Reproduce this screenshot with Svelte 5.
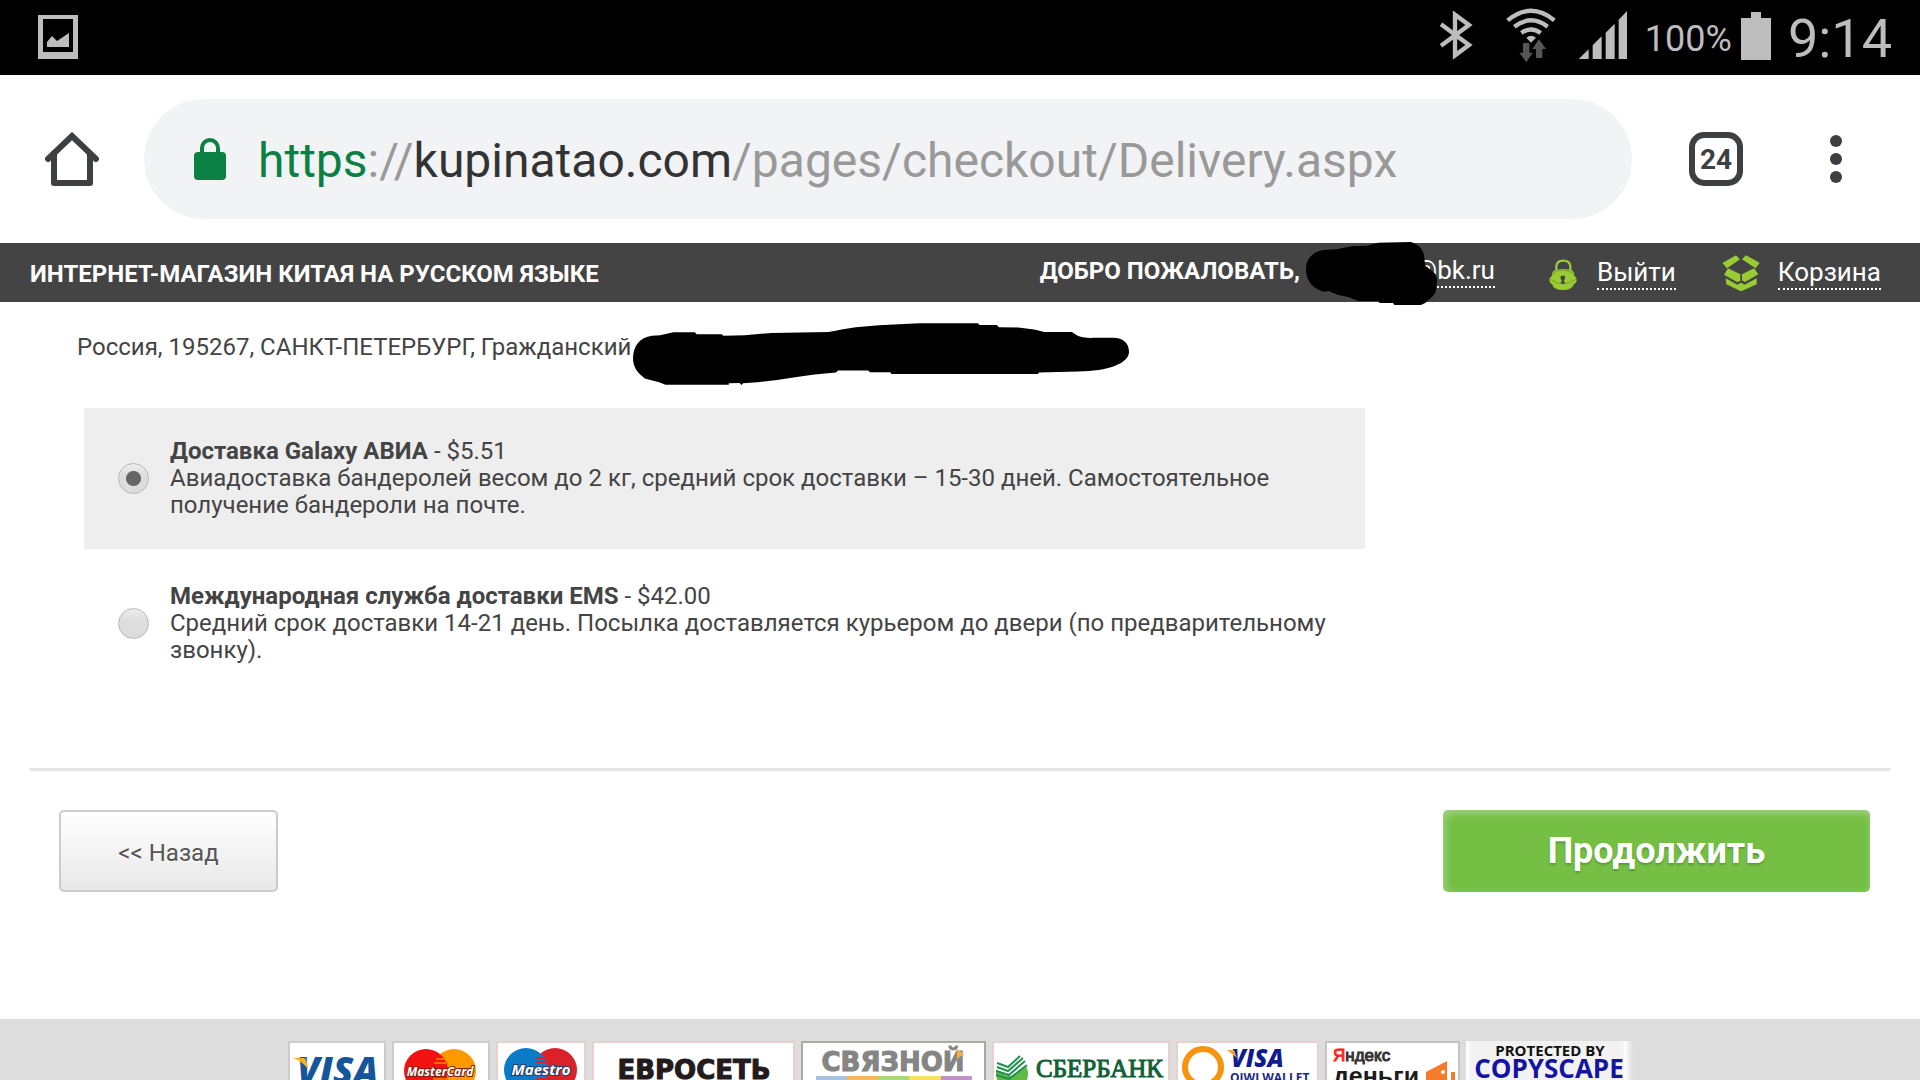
<script lang="ts">
  let selected = $state('avia');

  const options = [
    {
      id: 'avia',
      name: 'Доставка Galaxy АВИА',
      price: '$5.51',
      text: 'Авиадоставка бандеролей весом до 2 кг, средний срок доставки – 15-30 дней. Самостоятельное получение бандероли на почте.',
    },
    {
      id: 'ems',
      name: 'Международная служба доставки EMS',
      price: '$42.00',
      text: 'Средний срок доставки 14-21 день. Посылка доставляется курьером до двери (по предварительному звонку).',
    },
  ];
</script>

<div class="screen">
  <div class="status">
    <svg class="photo" width="40" height="44" viewBox="0 0 40 44">
      <path fill="#bdbdbd" fill-rule="evenodd" d="M0 0H40V44H0ZM5 4V37H35V4Z" />
      <path fill="#bdbdbd" d="M9 27L14 21L19 26L31 18V32H9Z" />
    </svg>
    <div class="status-right">
      <svg class="bluetooth" width="34" height="49" viewBox="118 36 102 147" fill="none" stroke="#bdbdbd" stroke-width="13">
        <path d="M124 76L208 138L166 169V47L208 78L124 140" />
      </svg>
      <svg class="wifi" width="52" height="55" viewBox="315 24 156 165">
        <g fill="none" stroke="#bdbdbd" stroke-width="13">
          <path d="M323 61Q393 4 463 61" />
          <path d="M343 80Q393 42 443 80" />
          <path d="M364 99Q393 78 422 99" />
        </g>
        <path fill="#bdbdbd" d="M379 113Q393 102 408 113L393 128Z" />
        <path fill="#565656" d="M369 129H388V158H398L379 187L358 158H369ZM417 118L438 147H427V174H408V147H397Z" />
      </svg>
      <svg class="signal" width="49" height="49" viewBox="535 36 147 147" fill="#bdbdbd">
        <path d="M537 180L567 151V180ZM579 139L606 112V180H579ZM618 101L645 74V180H618ZM657 62L682 36V180H657Z" />
      </svg>
      <span class="percent">100%</span>
      <svg class="battery" width="30" height="48" viewBox="0 0 30 48" fill="#bdbdbd">
        <path d="M10 0H20V6H30V48H0V6H10Z" />
      </svg>
      <span class="clock">9:14</span>
    </div>
  </div>

  <div class="toolbar">
    <button class="icon-button home" aria-label="Home">
      <svg width="54" height="54" viewBox="0 0 54 54" fill="none" stroke="#3c4043" stroke-width="6">
        <path stroke-linecap="round" d="M3 27L27 4L51 27" />
        <path stroke-linejoin="round" d="M9 22V51H45V22" />
      </svg>
    </button>
    <button class="omnibox">
      <svg width="32" height="42" viewBox="0 0 32 42">
        <rect y="14" width="32" height="28" rx="4" fill="#0b8043" />
        <path d="M8 15V10a8 8 0 0 1 16 0V15" fill="none" stroke="#0b8043" stroke-width="4" />
      </svg>
      <span class="url"><span class="scheme">https</span>://<span class="host">kupinatao.com</span>/pages/checkout/Delivery.aspx</span>
    </button>
    <button class="tabs">24</button>
    <button class="icon-button" aria-label="Menu">
      <svg width="12" height="48" viewBox="0 0 12 48" fill="#3c4043">
        <circle cx="6" cy="6" r="6" /><circle cx="6" cy="24" r="6" /><circle cx="6" cy="42" r="6" />
      </svg>
    </button>
  </div>

  <header class="site">
    <strong class="title">ИНТЕРНЕТ-МАГАЗИН КИТАЯ НА РУССКОМ ЯЗЫКЕ</strong>
    <div class="account">
      <strong class="welcome">ДОБРО ПОЖАЛОВАТЬ,</strong>
      <span class="mail">
        <a class="email" href="#profile">@bk.ru</a>
        <svg class="blob" width="131" height="63" viewBox="857 37 366 189" preserveAspectRatio="none">
          <path d="M857 120C857 90 872 68 905 61L942 59L985 50L1028 48L1058 39L1150 37C1172 45 1186 60 1187 80L1190 108C1205 120 1222 130 1223 148L1221 180C1217 200 1200 208 1190 220L1178 226H1104L1100 220H1063L1058 214H1003L975 202L948 196L920 184L908 186C880 180 857 155 857 120Z" />
        </svg>
      </span>
      <svg class="padlock" width="28" height="31" viewBox="448 778 84 93">
        <path d="M470 822V800Q471 783 491 783Q511 783 512 800V822" fill="none" stroke="#9c3" stroke-width="7" />
        <path d="M462 813Q490 803 519 813Q525 820 524 828Q532 834 531 843Q530 850 523 853Q517 871 490 871Q462 871 457 853Q449 850 449 841Q449 833 457 828Q456 820 462 813Z" fill="#9c3" />
        <path d="M453 839Q490 867 528 839M458 826Q466 811 489 812Q514 812 523 826" fill="none" stroke="#76a02c" stroke-width="3" />
        <path d="M483 828H496V838L493 842L496 852H483L486 842L483 838Z" fill="#444" />
      </svg>
      <a href="#logout">Выйти</a>
      <svg class="box" width="38" height="36" viewBox="968 768 114 108" fill="#9c3">
        <path d="M969 792L1010 769L1022 781L983 808ZM1040 769L1081 791L1069 808L1028 781ZM986 808L1023 826V846L1013 849L974 827ZM1064 808L1077 826L1037 849L1028 844V826ZM979 838L1014 857L1025 851L1036 857L1072 838V856L1025 877L981 856Z" />
      </svg>
      <a href="#cart">Корзина</a>
    </div>
  </header>

  <main>
    <div class="address">
      <span>Россия, 195267, САНКТ-ПЕТЕРБУРГ, Гражданский</span>
      <svg class="blob" width="496" height="62" viewBox="92 67 1388 188" preserveAspectRatio="none">
        <path d="M92 175C92 140 110 110 145 106L168 104L205 95H265L270 101H340L345 106L405 104L480 97L640 94L680 86L715 80L780 74L893 68H1057L1062 73H1110L1116 80L1170 81L1215 87L1243 94H1320L1335 105Q1350 113 1380 112H1435C1465 112 1480 130 1480 154C1480 190 1420 213 1338 214L1228 217L1225 222H815L812 216H755L750 211H666L660 217L600 223L555 230L495 240L440 247L400 250L396 255L390 249L360 250V254H183L165 247L125 235C105 220 92 200 92 175Z" />
      </svg>
    </div>

    <form id="delivery" class="options">
      {#each options as option (option.id)}
        <label class="option" class:selected={selected === option.id}>
          <input type="radio" name="delivery" value={option.id} bind:group={selected} />
          <span><strong>{option.name}</strong> - {option.price}<br />{option.text}</span>
        </label>
      {/each}
    </form>

    <div class="actions">
      <button class="back" type="button">&lt;&lt; Назад</button>
      <button class="next" type="submit" form="delivery">Продолжить</button>
    </div>
  </main>

  <footer>
    <svg class="badge" width="98" height="66" viewBox="0 0 98 66">
      <rect class="frame" x="1" y="1" width="96" height="64" stroke="#ccc" />
      <text x="9" y="43" font-family="Open Sans" font-size="37" font-weight="800" font-style="italic" fill="#15559c">VISA</text>
      <path d="M5 17H16Q19 18 20 28Q14 20 5 17Z" fill="#f5b323" />
    </svg>
    <svg class="badge" width="98" height="66" viewBox="0 0 98 66">
      <rect class="frame" x="1" y="1" width="96" height="64" stroke="#ccc" />
      <circle cx="62" cy="30" r="22" fill="#f90" />
      <circle cx="34" cy="30" r="22" fill="#f11212" />
      <path d="M44 18H53M42 22H56M41 38H56" stroke="#f60" stroke-width="2" />
      <text x="48" y="35" text-anchor="middle" font-family="Open Sans" font-size="12" font-weight="700" font-style="italic" fill="#fff" stroke="#802010" stroke-width="2" paint-order="stroke">MasterCard</text>
    </svg>
    <svg class="badge" width="90" height="66" viewBox="0 0 90 66">
      <rect class="frame" x="1" y="1" width="88" height="64" stroke="#e8d0cc" />
      <circle cx="59" cy="29" r="22" fill="#d9222a" />
      <circle cx="30" cy="29" r="22" fill="#0b7bc8" />
      <path d="M40 17H49M40 21H51M40 38H51" stroke="#d9222a" stroke-width="2" />
      <text x="45" y="34" text-anchor="middle" font-family="Open Sans" font-size="15" font-weight="700" font-style="italic" fill="#fff" stroke="#244070" stroke-width="2" paint-order="stroke">Maestro</text>
    </svg>
    <svg class="badge" width="203" height="66" viewBox="0 0 203 66">
      <rect class="frame" x="1" y="1" width="201" height="64" stroke="#e8d0cc" />
      <text x="102" y="38" text-anchor="middle" font-family="DejaVu Sans" font-size="26" font-weight="700" fill="#231a1c" stroke="#231a1c">ЕВРОСЕТЬ</text>
    </svg>
    <svg class="badge" width="185" height="66" viewBox="0 0 185 66">
      <rect class="frame" x="1" y="1" width="183" height="64" stroke="#a9aba0" />
      <text x="92" y="30" text-anchor="middle" font-family="DejaVu Sans" font-size="26" font-weight="700" fill="#858585" stroke="#858585">СВЯЗНОЙ</text>
      <path d="M156 8L163 13L156 18Z" fill="#f6b042" />
      <path d="M15 35H46V60H15Z" fill="#a6c1e2" /><path d="M46 35H77V60H46Z" fill="#f5b75c" />
      <path d="M77 35H108V60H77Z" fill="#abd77b" /><path d="M108 35H140V60H108Z" fill="#f7e15c" />
      <path d="M140 35H171V60H140Z" fill="#bf93c4" />
    </svg>
    <svg class="badge" width="178" height="66" viewBox="0 0 178 66">
      <rect class="frame" x="1" y="1" width="176" height="64" stroke="#e8d0cc" />
      <circle cx="20" cy="33" r="16" fill="#62b945" />
      <path d="M3 17H37V24L19 35L3 28Z" fill="#fff" />
      <g fill="none" stroke="#229150" stroke-width="2">
        <path d="M5 22L16 26L28 15" /><path d="M5 26L16 30L31 17" /><path d="M4 30L17 34L33 20" /><path d="M4 34L17 38L35 24" />
      </g>
      <text x="44" y="36" font-family="Liberation Serif" font-size="25" fill="#116137" stroke="#116137">СБЕРБАНК</text>
    </svg>
    <svg class="badge" width="143" height="66" viewBox="0 0 143 66">
      <rect class="frame" x="1" y="1" width="141" height="64" stroke="#e8d0cc" />
      <ellipse cx="27" cy="26" rx="18" ry="18" fill="none" stroke="#f7930d" stroke-width="6" />
      <text x="55" y="26" font-family="Open Sans" font-size="24" font-weight="800" font-style="italic" fill="#101b91">VISA</text>
      <path d="M51 9H58L61 17Z" fill="#f6a423" />
      <text x="54" y="41" font-family="Open Sans" font-size="12" font-weight="700" fill="#20297f">QIWI WALLET</text>
    </svg>
    <svg class="badge" width="135" height="66" viewBox="0 0 135 66">
      <rect class="frame" x="1" y="1" width="133" height="64" stroke="#c4c4c4" />
      <text x="8" y="20" font-family="Liberation Sans" font-size="17" fill="#333" stroke="#333"><tspan fill="#f22" stroke="#f22">Я</tspan>ндекс</text>
      <text x="8" y="44" font-family="Liberation Sans" font-size="25" font-weight="700" fill="#1c1c1c">деньги</text>
      <path d="M101 31L122 20V46H101Z" fill="#f47b2a" /><path d="M126 31H130V46H126Z" fill="#f47b2a" />
      <circle cx="118" cy="31" r="2" fill="#fff" />
    </svg>
    <svg class="badge" width="167" height="66" viewBox="0 0 167 66">
      <defs>
        <linearGradient id="edge"><stop offset="0" stop-color="#fff" /><stop offset=".04" stop-color="#f2f2f2" /><stop offset=".94" stop-color="#f2f2f2" /><stop offset=".95" stop-color="#fff" /><stop offset="1" stop-color="#ddd" /></linearGradient>
      </defs>
      <rect width="167" height="66" fill="url(#edge)" />
      <text x="84" y="15" text-anchor="middle" font-family="Open Sans" font-size="15" font-weight="700" fill="#111">PROTECTED BY</text>
      <text x="83" y="37" text-anchor="middle" font-family="Open Sans" font-size="26" font-weight="700" fill="#1414a4">COPYSCAPE</text>
    </svg>
  </footer>
</div>

<style>
  :global(body) {
    margin: 0;
    background: #fff;
  }
  .screen {
    display: flex;
    flex-direction: column;
    height: 100vh;
    overflow: hidden;
    font: 24px/28px Roboto, sans-serif;
    color: #444;
  }
  svg {
    display: block;
    flex: none;
  }
  button {
    border: 0;
    margin: 0;
    padding: 0;
    background: none;
    font: inherit;
    color: inherit;
    cursor: pointer;
  }

  .status {
    flex: none;
    display: flex;
    justify-content: space-between;
    align-items: center;
    height: 75px;
    box-sizing: border-box;
    padding: 0 28px 2px 38px;
    background: #000;
    color: #bdbdbd;
  }
  .status-right {
    display: flex;
    align-items: center;
  }
  .bluetooth,
  .wifi,
  .signal {
    margin-bottom: 2px;
  }
  .wifi {
    margin-left: 32px;
  }
  .signal {
    margin-left: 21px;
  }
  .percent {
    margin: 4px 9px 0 18px;
    font-size: 36px;
    line-height: 44px;
  }
  .battery {
    margin-bottom: 2px;
  }
  .clock {
    margin: 4px 0 0 17px;
    font-size: 54px;
    line-height: 64px;
  }

  .toolbar {
    flex: none;
    display: flex;
    align-items: center;
    height: 168px;
    padding: 0 78px 0 45px;
    color: #3c4043;
  }
  .omnibox {
    flex: 1;
    min-width: 0;
    display: flex;
    align-items: center;
    height: 120px;
    margin: 0 57px 0 45px;
    padding: 0 50px;
    gap: 32px;
    border-radius: 60px;
    background: #f1f3f4;
    text-align: left;
  }
  .url {
    padding-top: 4px;
    font-size: 48px;
    line-height: 56px;
    color: #999;
    white-space: nowrap;
  }
  .scheme {
    color: #0b8043;
  }
  .host {
    color: #333;
  }
  .tabs {
    width: 54px;
    height: 54px;
    margin-right: 87px;
    padding-top: 2px;
    border: 6px solid #3c4043;
    border-radius: 15px;
    font-size: 28px;
    font-weight: 700;
    line-height: 40px;
  }

  .site {
    flex: none;
    display: flex;
    justify-content: space-between;
    align-items: center;
    height: 59px;
    padding: 0 39px 0 30px;
    background: #444;
    color: #fff;
  }
  .title {
    padding-top: 2px;
  }
  .account {
    display: flex;
    align-items: center;
    font-size: 26px;
  }
  .welcome {
    margin: 0 6px 4px 0;
    font-size: 24px;
  }
  .account a {
    color: inherit;
    text-decoration: none;
    line-height: 32px;
    border-bottom: 2px dotted #fff;
  }
  .mail {
    position: relative;
    padding-left: 108px;
    margin-bottom: 4px;
  }
  .email {
    display: block;
  }
  .mail .blob {
    position: absolute;
    left: 0;
    top: -12px;
  }
  .padlock {
    margin: 4px 20px 0 54px;
  }
  .box {
    margin: 0 18px 0 46px;
  }

  main {
    flex: 1 0 auto;
    padding: 31px 30px 0;
  }
  .address {
    display: flex;
    gap: 2px;
    height: 28px;
    margin-left: 47px;
  }
  .address .blob {
    position: relative;
    top: -10px;
  }
  .options {
    display: flex;
    flex-direction: column;
    gap: 4px;
    max-width: 1281px;
    margin: 47px 54px 74px;
  }
  .option {
    display: flex;
    align-items: center;
    gap: 21px;
    padding: 30px 30px 30px 34px;
    line-height: 27px;
    cursor: pointer;
  }
  .option.selected {
    background: #eee;
  }
  .option input {
    appearance: none;
    flex: none;
    width: 31px;
    height: 31px;
    margin: 0;
    border: 1px solid #b8b8b8;
    border-radius: 50%;
    background: linear-gradient(#eee, #ddd 40%, #ddd);
  }
  .option input:checked {
    background:
      radial-gradient(circle, #666 7px, transparent 8px),
      linear-gradient(#eee, #ddd 40%, #ddd);
  }
  .actions {
    display: flex;
    justify-content: space-between;
    padding: 39px 20px 127px 29px;
    border-top: 3px solid #e4e4e4;
  }
  .actions button {
    height: 82px;
    border-radius: 5px;
  }
  .back {
    width: 219px;
    padding-top: 4px;
    border: 2px solid #ccc;
    background: linear-gradient(#fff, #e8e8e8);
    color: #555;
    text-shadow: 0 1px 1px #fff;
  }
  .next {
    width: 427px;
    background: #74bf44;
    box-shadow: inset 2px 3px 8px rgba(255, 255, 255, 0.35);
    color: #fff;
    font-size: 36px;
    font-weight: 700;
    text-shadow: 0 2px 2px rgba(0, 0, 0, 0.2);
  }

  footer {
    flex: none;
    display: flex;
    justify-content: center;
    gap: 6px;
    height: 39px;
    padding-top: 22px;
    background: #ddd;
  }
  .frame {
    fill: #fff;
    stroke-width: 2px;
  }
</style>
